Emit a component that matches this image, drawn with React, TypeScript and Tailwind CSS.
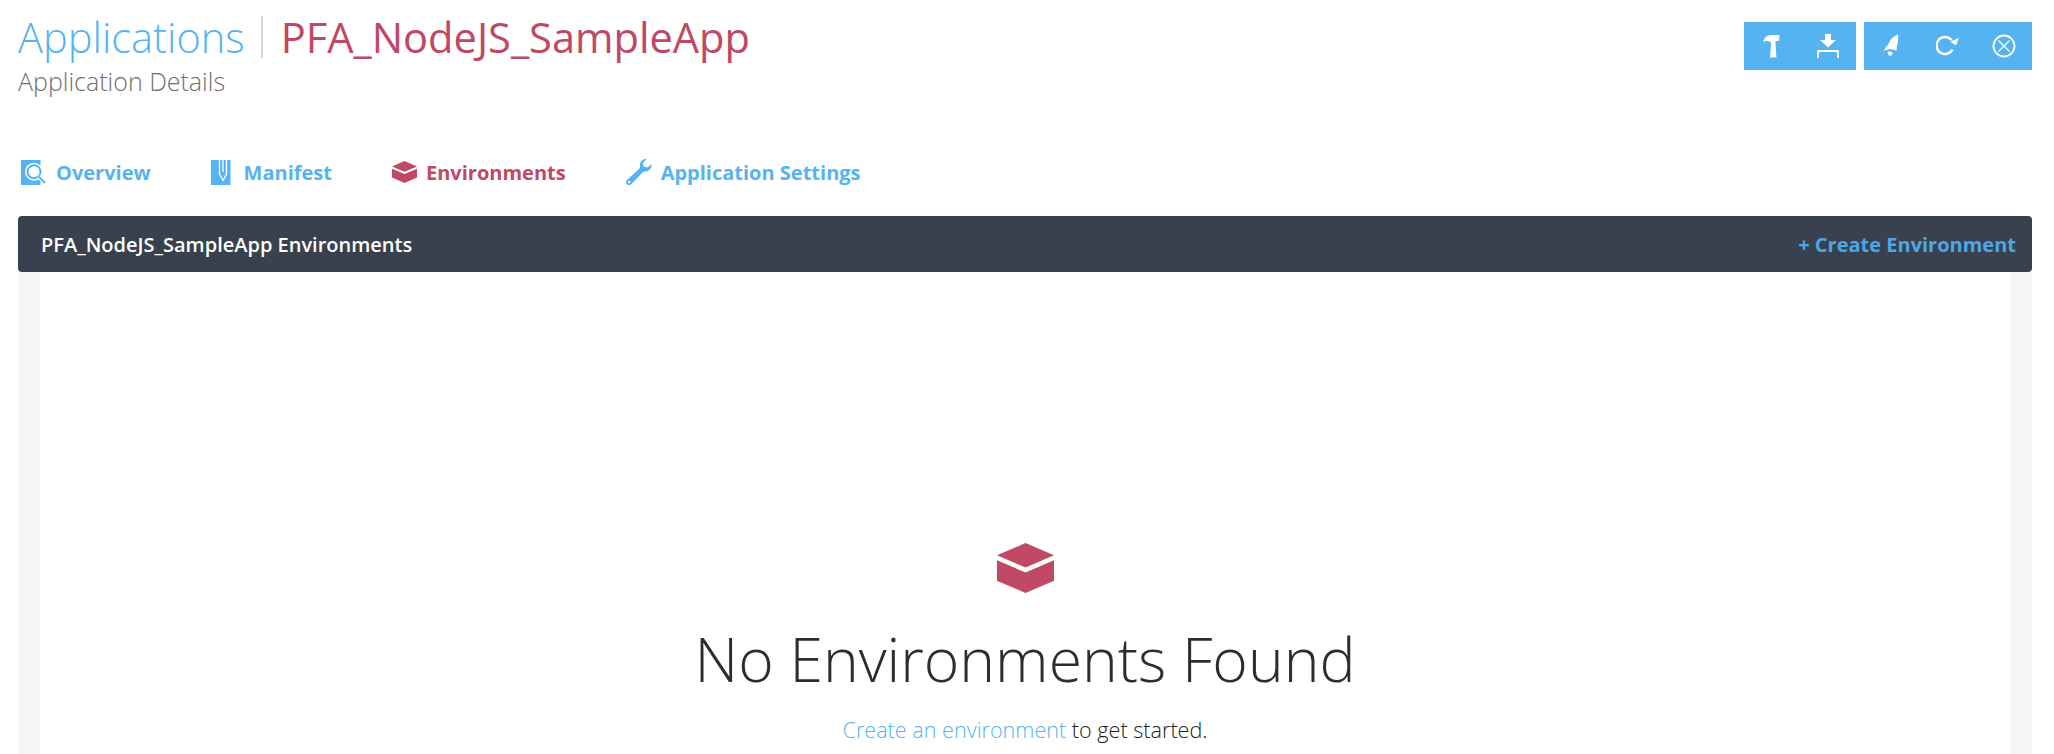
import React from "react";

const Cube = ({ className }: { className: string }) => (
  <svg viewBox="0 0 56 49" className={className} fill="currentColor">
    <path d="M28 0L56 12L28 24L0 12Z" />
    <path d="M0 17L28 29L56 17V37L28 49L0 37Z" />
  </svg>
);

const Hammer = () => (
  <svg viewBox="0 0 24 24" className="h-6 w-6" fill="white">
    <path d="M3 8C4 4 7 1 11 1H19.500L19 7H15.500C15.500 12 16 18 16.500 23.500H10C10.500 18 11 13 11 8.500C9 6.500 5.500 6.500 3 8Z" />
  </svg>
);

const Tray = () => (
  <svg viewBox="0 0 24 24" className="h-6 w-6" fill="white">
    <path d="M9 0H15V6H20L12 13.500L4 6H9Z" />
    <path d="M1 24V17.500C1 16.500 1.500 16 2.500 16H21.500C22.500 16 23 16.500 23 17.500V24H21V18H3V24Z" />
  </svg>
);

const Rocket = () => (
  <svg viewBox="0 0 24 24" className="h-6 w-6" fill="white">
    <path d="M18 0.300C18.500 4 18 9 17 12L16.500 17C13.500 14.500 8 14.500 4 17C4.500 14.500 6 12.500 8 11C9.500 6 13 2.500 18 0.300Z" />
    <path d="M7.500 18C9.500 17 11.500 17.500 13 19C12 21 11 22 9.500 22C8.500 21 8 20 7.500 18Z" />
  </svg>
);

const Rotate = () => (
  <svg viewBox="0 0 24 24" className="h-6 w-6" fill="none" stroke="white" strokeWidth="2.400">
    <path d="M16.500 15.500A8.500 8.500 0 1 1 15.500 6" />
    <path d="M23 3.800L20 11.300L14.300 7.700Z" fill="white" stroke="none" />
  </svg>
);

const XCircle = () => (
  <svg viewBox="0 0 24 24" className="h-6 w-6" fill="none" stroke="white">
    <circle cx="12" cy="12" r="10.500" strokeWidth="1.800" />
    <path d="M6.500 6.500L17.500 17.500M17.500 6.500L6.500 17.500" strokeWidth="1.200" />
  </svg>
);

const Overview = () => (
  <svg viewBox="0 0 25 25" className="h-[25px] w-[25px] text-[#56b3f2]">
    <path fill="currentColor" d="M0 0H19.500V25H0Z" />
    <circle cx="13" cy="11.700" r="9" fill="white" />
    <circle cx="13" cy="11.700" r="6.500" fill="white" stroke="currentColor" strokeWidth="2" />
    <path d="M17.500 16.500L24 23" stroke="white" strokeWidth="4" />
    <path d="M17.500 16.500L24 23" stroke="currentColor" strokeWidth="2" />
  </svg>
);

const Manifest = () => (
  <svg viewBox="0 0 20 25" className="h-[25px] w-5 text-[#56b3f2]">
    <path fill="currentColor" d="M0 0H19.500V25H0Z" />
    <path d="M8.500 0V14L12 20.500L15.500 14V0" fill="none" stroke="white" strokeWidth="1.300" />
    <path d="M12 0V12" stroke="white" strokeWidth="1.300" />
  </svg>
);

const Wrench = () => (
  <svg viewBox="0 0 26 26" className="h-[26px] w-[26px] text-[#56b3f2]" fill="currentColor">
    <path d="M20 0C16 0 13.500 3 14 7.500C14 8.500 14 9 13 10L1 21C-0.500 22.500 0 24.500 1 25.500C2 26.500 4 26.500 5.500 25L16.500 13.500C17.500 12.500 18 12.500 19 12.500C23 12.500 26 9.500 25.500 5L21.500 8.500L17.500 7.500L17 4L20.500 0Z" />
    <circle cx="3.200" cy="23" r="1.200" fill="white" />
  </svg>
);

const tabs = [
  { label: "Overview", icon: <Overview />, color: "text-[#56b3f2]", gap: "gap-[10px]" },
  { label: "Manifest", icon: <Manifest />, color: "text-[#56b3f2]", gap: "gap-[13px]" },
  { label: "Environments", icon: <Cube className="h-[22px] w-[25px]" />, color: "text-[#c04864]", gap: "gap-[9px]" },
  { label: "Application Settings", icon: <Wrench />, color: "text-[#56b3f2]", gap: "gap-[9px]" },
];

export default function App() {
  return (
    <div className="h-[754px] w-[2054px] overflow-hidden bg-white pr-[22px] pl-[18px] font-['Open_Sans',sans-serif] antialiased">
      <header className="flex h-[159px] items-start justify-between">
        <div className="pt-[8px]">
          <h1 className="flex items-center text-[41.600px] leading-[58px] font-light">
            <span className="text-[#56b3f2]">Applications</span>
            <span className="mr-[18px] ml-[16px] h-[42px] w-[2px] bg-[#d5d7da]" />
            <span className="font-normal text-[#c04864]">PFA_NodeJS_SampleApp</span>
          </h1>
          <p className="-mt-[1px] text-[25px] leading-[32px] font-light text-[#6f6f6f]">Application Details</p>
        </div>
        <div className="mt-[22px] flex gap-2">
          <div className="flex h-12 bg-[#56b3f2]">
            {[<Hammer key="a" />, <Tray key="b" />].map((i, n) => (
              <button key={n} className="flex h-12 w-14 items-center justify-center">{i}</button>
            ))}
          </div>
          <div className="flex h-12 bg-[#56b3f2]">
            {[<Rocket key="a" />, <Rotate key="b" />, <XCircle key="c" />].map((i, n) => (
              <button key={n} className="flex h-12 w-14 items-center justify-center">{i}</button>
            ))}
          </div>
        </div>
      </header>
      <nav className="flex h-[57px] items-start gap-[60px] pl-[3px]">
        {tabs.map((t) => (
          <a key={t.label} className={`flex h-[26px] items-center ${t.gap} ${t.color}`}>
            {t.icon}
            <span className="translate-y-[1px] text-[20px] leading-[26px] font-bold">{t.label}</span>
          </a>
        ))}
      </nav>
      <div className="flex h-14 items-center justify-between rounded-[4px] bg-[#3a414e] pt-[2px] pr-4 pl-[23px]">
        <span className="text-[20px] font-semibold text-white">PFA_NodeJS_SampleApp Environments</span>
        <a className="text-[20px] font-bold text-[#4aa8e8]">+ Create Environment</a>
      </div>
      <div className="bg-[#f5f6f8] px-[22px]">
        <div className="flex h-[482px] flex-col items-center bg-white pt-[271px]">
          <Cube className="h-[50px] w-[57px] text-[#c04864]" />
          <h2 className="mt-[26px] text-[60.600px] leading-[80px] font-light text-[#2d2d2d]">No Environments Found</h2>
          <p className="mt-[16px] text-[21.600px] leading-[30px] font-light text-[#222]">
            <a className="text-[#56b3f2]">Create an environment</a> to get started.
          </p>
        </div>
      </div>
    </div>
  );
}
